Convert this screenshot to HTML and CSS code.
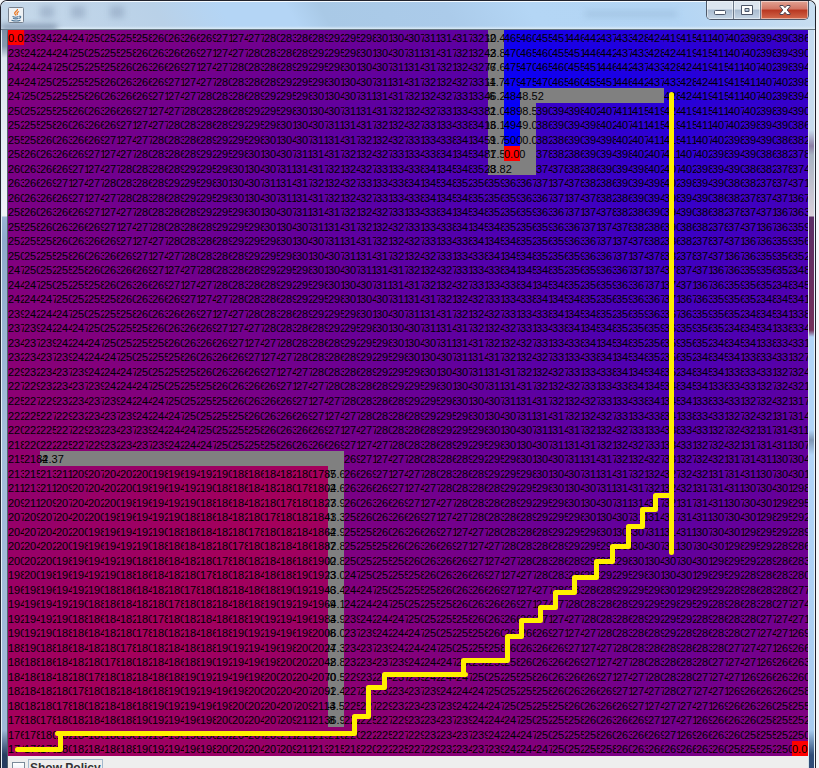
FILE: index.html
```html
<!DOCTYPE html>
<html lang="en">
<head>
<meta charset="utf-8">
<title>Grid World</title>
<link rel="stylesheet" href="styles.css">
</head>
<body>
<div class="window">
  <header class="titlebar">
    <span class="ghost ghost-left"></span>
    <span class="ghost ghost-save"></span>
    <span class="ghost ghost-undo"></span>
    <span class="ghost ghost-redo"></span>
    <svg class="app-icon" viewBox="0 0 16 16" aria-hidden="true">
      <rect x=".5" y=".5" width="15" height="15" rx="1" fill="#eef1f4" stroke="#76818f"/>
      <path d="M9.500 2C10 4 6.200 4.500 6.700 6.500L8 8.500M11 4.500C9 5.300 8.500 6.500 9.500 8" fill="none" stroke="#e87722" stroke-width="1.300"/>
      <path d="M4.500 9.500c2 .8 4.500 .8 6 0M5 11.200c2 .8 4 .8 5.500 0M3.500 13.200c3 1 6.500 1 9 0M11 9.300c2.200-.6 2.500 1.200 .2 2.200" fill="none" stroke="#4b7396" stroke-width="1.100"/>
    </svg>
    <span class="ghost ghost-title"></span>
    <div class="controls">
      <button class="control" aria-label="Minimize"><svg viewBox="0 0 14 12"><rect x="1.500" y="6.500" width="11" height="4" rx="1" fill="#fff" stroke="#4d5669"/></svg></button>
      <button class="control" aria-label="Maximize"><svg viewBox="0 0 14 12"><path fill-rule="evenodd" d="M1.500 1.500h11v9h-11zM5 4.500h4v3H5z" fill="#fff" stroke="#4d5669"/></svg></button>
      <button class="control close" aria-label="Close"><svg viewBox="0 0 14 12"><path d="M2 1.500h3.200L7 3.700l1.800-2.200H12v1L9.200 6l2.800 3.500v1H8.800L7 8.300l-1.800 2.200H2v-1L4.800 6 2 2.500z" fill="#fff" stroke="#4d4350"/></svg></button>
    </div>
  </header>
  <div class="middle">
    <div class="edge edge-left"></div>
    <main class="content">
      <div class="world">
        <div class="cells" id="cells"></div>
        <svg class="trace" viewBox="7.500 29.500 800 726" preserveAspectRatio="none" aria-hidden="true">
          <path d="M17 749H60V733M57 733H354V716H368V687H384V674H465M463 674V660H507V636H521V620H540V607H555V592H574V577H596V561H612V546H628V526H642V509H655V495H671M671 94V552"/>
        </svg>
      </div>
      <footer class="toolbar">
        <input class="check" type="checkbox" id="policy">
        <label class="policy" for="policy">Show Policy</label>
      </footer>
    </main>
    <div class="edge edge-right"></div>
  </div>
</div>
<script src="world.js"></script>
</body>
</html>
```
FILE: styles.css
```css
* { box-sizing: border-box; }

body {
  margin: 0;
  background: #f4f7fa;
  font-family: "Liberation Sans", Arial, sans-serif;
}

.window {
  display: flex;
  flex-direction: column;
  height: 100vh;
  margin-right: 3px;
  overflow: hidden;
  border: solid #20222c;
  border-width: 1px 1px 0;
  border-radius: 7px 7px 0 0;
}

.titlebar {
  display: flex;
  flex: none;
  align-items: flex-start;
  height: 29px;
  padding-left: 7px;
  border-top: 1px solid #f4faff;
  border-bottom: 1px solid #66777f;
  background:
    linear-gradient(#fff0 24px, #ddecf8 27px),
    linear-gradient(60deg, #c6d8e9 0%, #b9d1e8 20%, #b4d5f5 28%, #b4d5f5 36%, #a9c9e6 40%, #abcbea 55%, #b4d6f5 65%, #b3d5f4 82%, #c9def0 100%);
  position: relative;
}

.app-icon {
  width: 16px;
  height: 16px;
  margin-top: 5px;
  position: relative;
}

.ghost {
  position: absolute;
  filter: blur(3px);
}

.ghost-left {
  left: 0;
  top: 23px;
  width: 56px;
  height: 5px;
  background: #7185a0;
}

.ghost-save,
.ghost-undo,
.ghost-redo {
  top: 4px;
  width: 14px;
  height: 12px;
  background: #8398b477;
}

.ghost-save { left: 39px; }
.ghost-undo { left: 70px; }
.ghost-redo { left: 109px; }

.ghost-title {
  left: 584px;
  top: 9px;
  width: 92px;
  height: 6px;
  background: #8daccb66;
}

.controls {
  display: flex;
  height: 19px;
  margin-top: -1px;
  margin-right: 6px;
  margin-left: auto;
  overflow: hidden;
  border: 1px solid #4e5969;
  border-top: 0;
  border-radius: 0 0 5px 5px;
  position: relative;
}

.control {
  display: flex;
  align-items: center;
  justify-content: center;
  width: 27px;
  padding: 0;
  border: 0;
  border-right: 1px solid #6c7888;
  background: linear-gradient(#dce5ef 0 45%, #a9bbcf 50%, #c5d5e5);
  box-shadow: inset 0 0 0 1px #ffffff77;
}

.control svg { width: 14px; height: 12px; }

.close {
  width: 47px;
  border-right: 0;
  background: linear-gradient(#e2a394, #d17564 45%, #b83721 50%, #d3694c);
}

.middle {
  display: flex;
  flex: 1;
  min-height: 0;
}

.edge { flex: none; }

.edge-left {
  width: 7px;
  border-right: 1px solid #52636f;
  border-left: 1px solid #e6f0f8;
  background: linear-gradient(#7d90a8 0, #8698ae 16px, #dce6ef 28px, #eef3f7 186px, #9ab5d6 187px, #8fabcc 210px, #a4bedb 400px, #9fb9d8 700px, #263d60 725px);
}

.edge-right {
  width: 7px;
  border-right: 1px solid #e8f2fa;
  border-left: 1px solid #d5e2ea;
  background: linear-gradient(#c5dcf0 0, #c8dced 100px, #8d7fa5 116px, #a9b4c2 125px, #d8d0da 186px, #5b2e66 187px, #74305a 300px, #b2d5f8 307px, #b2d5f8 400px, #7f97b4 410px, #b2d5f8 425px, #a9ccef 700px, #304d78 725px);
}

.content {
  display: flex;
  flex: 1;
  flex-direction: column;
  min-width: 0;
  overflow: hidden;
  background: #eee;
}

.world {
  display: grid;
  flex: 1;
  min-height: 0;
  overflow: hidden;
}

.cells, .trace { grid-area: 1 / 1; min-width: 0; min-height: 0; }

.cells {
  display: grid;
  grid-template-rows: repeat(50, minmax(0, 1fr));
  grid-template-columns: repeat(50, minmax(0, 1fr));
  background: #808080;
  color: #000;
  font-size: 11px;
  line-height: 16px;
  white-space: nowrap;
}

/* Every cell paints over the overflowing number of the one before it. */
.cell { isolation: isolate; min-height: 0; }

.terminal { background: #f00; }

.trace {
  z-index: 1;
  width: 100%;
  height: 100%;
  fill: none;
  stroke: #fff000;
  stroke-width: 5;
  stroke-linecap: round;
  stroke-linejoin: round;
}

.toolbar {
  display: flex;
  flex: none;
  gap: 3px;
  height: 12px;
  padding: 3px 4px 0;
  overflow: hidden;
}

.check {
  flex: none;
  width: 13px;
  height: 13px;
  margin: 3px 0 0;
  border: 1px solid #7a8a99;
  appearance: none;
  background: linear-gradient(#fff, #dce8f3);
}

.policy {
  flex: none;
  height: 20px;
  padding: 0 1px;
  border: 1px solid #a3b8cc;
  color: #333;
  font-size: 12px;
  font-weight: bold;
  line-height: 16px;
}
```
FILE: world.js
```js
const SIZE = 50;
const START_VALUE = 5000;
const DISCOUNT = 0.99;
const STEP_COST = 1;

const key = (x, y) => y * SIZE + x;
const walls = new Set();
const addWall = (x0, y0, x1, y1) => {
  for (let y = y0; y <= y1; y++) {
    for (let x = x0; x <= x1; x++) walls.add(key(x, y));
  }
};
addWall(30, 0, 30, 9);
addWall(30, 9, 32, 9);
addWall(32, 4, 32, 9);
addWall(32, 4, 40, 4);
addWall(2, 29, 20, 29);
addWall(20, 29, 20, 47);

const terminals = new Set([key(0, 0), key(31, 8), key(49, 49)]);

// Breadth-first spread of the value from the cell above the goal.
const values = new Map([[key(31, 7), START_VALUE]]);
const queue = [[31, 7]];
for (const [x, y] of queue) {
  const next = values.get(key(x, y)) * DISCOUNT - STEP_COST;
  for (const [nx, ny] of [[x + 1, y], [x - 1, y], [x, y + 1], [x, y - 1]]) {
    if (nx < 0 || ny < 0 || nx >= SIZE || ny >= SIZE) continue;
    const k = key(nx, ny);
    if (walls.has(k) || terminals.has(k) || values.has(k)) continue;
    values.set(k, next);
    queue.push([nx, ny]);
  }
}

const board = document.getElementById("cells");
for (let k = 0; k < SIZE * SIZE; k++) {
  const cell = document.createElement("div");
  if (terminals.has(k)) {
    cell.className = "cell terminal";
    cell.textContent = "0.00";
  } else if (!walls.has(k)) {
    const value = values.get(k);
    const blue = Math.round(255 * value / START_VALUE);
    cell.className = "cell";
    cell.textContent = value.toFixed(2);
    cell.style.backgroundColor = `rgb(${255 - blue}, 0, ${blue})`;
  }
  board.append(cell);
}
```
